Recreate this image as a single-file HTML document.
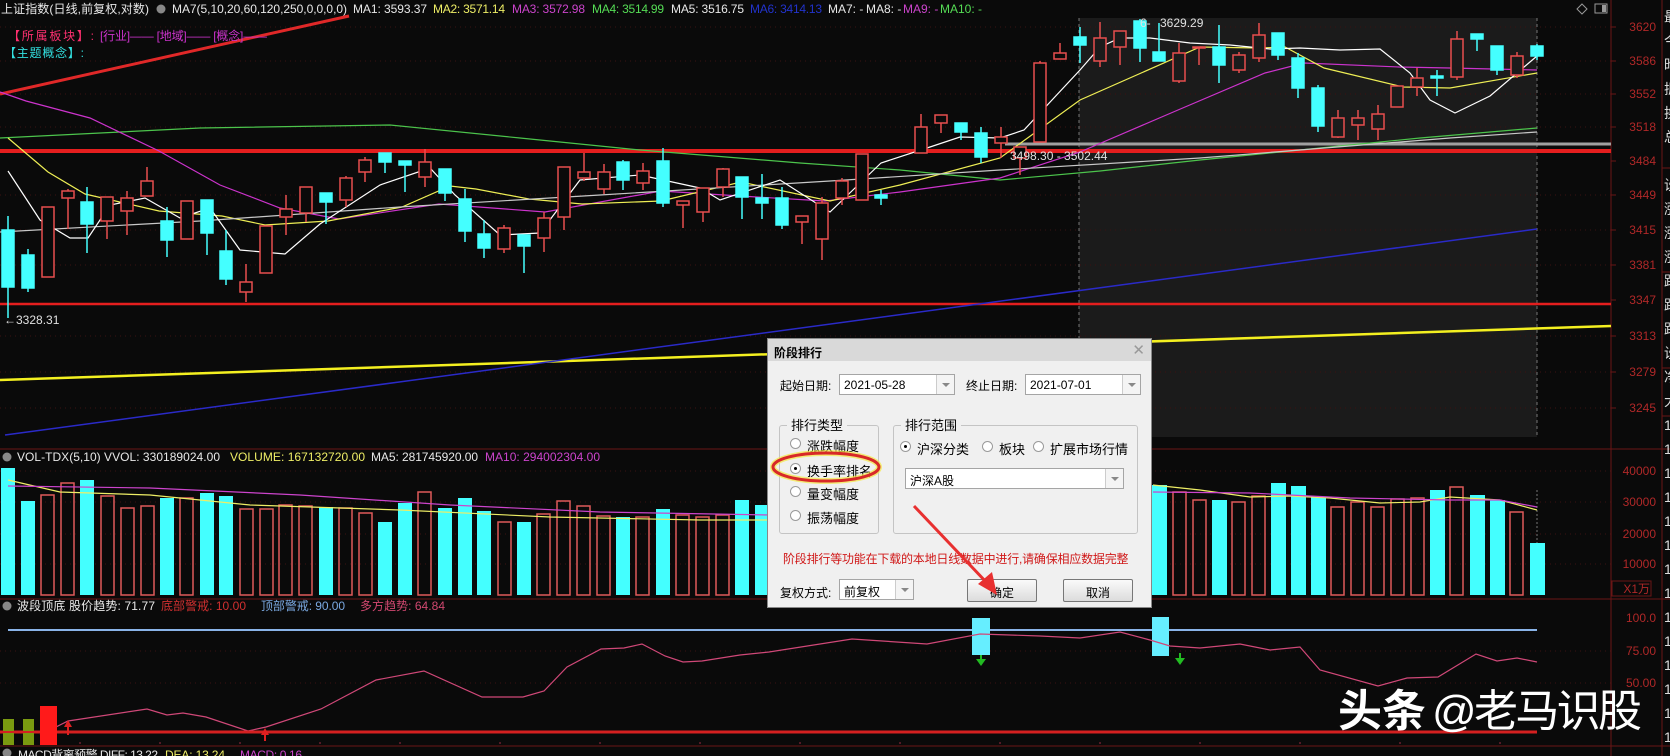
<!DOCTYPE html>
<html><head><meta charset="utf-8"><style>
*{margin:0;padding:0;box-sizing:border-box}
body{width:1670px;height:756px;background:#0a0a0a;overflow:hidden;position:relative;font-family:"Liberation Sans","Noto Sans CJK SC",sans-serif}
svg{position:absolute;left:0;top:0}
.dlg{position:absolute;left:767px;top:338px;width:385px;height:270px;background:#f0f0f0;border:1px solid #888;font-size:12px;color:#000}
.dlg .t{position:absolute;left:0;top:0;width:100%;height:22px;background:#d9d9d9;font-weight:bold;font-size:12px;padding:5px 0 0 6px}
.dlg .x{position:absolute;right:6px;top:2px;font-size:15px;color:#999;font-weight:normal}
.a{position:absolute;white-space:nowrap}
.cb{position:absolute;background:#fff;border:1px solid #a5a5a5;height:21px;font-size:12px;padding:3px 0 0 4px}
.cb i{position:absolute;right:0;top:0;width:18px;height:19px;border-left:1px solid #ccc;background:#f4f4f4}
.cb i:after{content:"";position:absolute;left:5px;top:8px;border:4px solid transparent;border-top:4px solid #888}
.gb{position:absolute;border:1px solid #c4c4c4;border-radius:3px}
.gl{position:absolute;background:#f0f0f0;padding:0 4px;font-size:13px}
.rd{position:absolute;width:11px;height:11px;border-radius:50%;border:1px solid #9a9a9a;background:#fff}
.rd.on:after{content:"";position:absolute;left:3px;top:3px;width:3px;height:3px;border-radius:50%;background:#000}
.bt{position:absolute;height:23px;border:1px solid #777;border-radius:2px;background:linear-gradient(#fafafa,#dcdcdc);text-align:center;padding-top:4px;font-size:12px}
</style></head><body>
<svg width="1670" height="756" viewBox="0 0 1670 756" font-family="Liberation Sans, Noto Sans CJK SC, sans-serif">
<rect x="1079" y="18" width="458" height="419" fill="#1b1b1b"/>
<g stroke="#3c1212" stroke-dasharray="1 4" stroke-width="1">
<line x1="0" y1="27" x2="1611" y2="27"/><line x1="0" y1="61" x2="1611" y2="61"/><line x1="0" y1="94" x2="1611" y2="94"/><line x1="0" y1="127" x2="1611" y2="127"/><line x1="0" y1="195" x2="1611" y2="195"/><line x1="0" y1="230" x2="1611" y2="230"/><line x1="0" y1="265" x2="1611" y2="265"/><line x1="0" y1="336" x2="1611" y2="336"/><line x1="0" y1="372" x2="1611" y2="372"/><line x1="0" y1="408" x2="1611" y2="408"/>
<line x1="0" y1="471" x2="1611" y2="471"/><line x1="0" y1="502" x2="1611" y2="502"/><line x1="0" y1="534" x2="1611" y2="534"/><line x1="0" y1="564" x2="1611" y2="564"/>
<line x1="0" y1="651" x2="1611" y2="651"/><line x1="0" y1="683" x2="1611" y2="683"/>
</g>
<line x1="1079" y1="18" x2="1079" y2="437" stroke="#777" stroke-dasharray="3 3"/>
<line x1="1537" y1="18" x2="1537" y2="437" stroke="#777" stroke-dasharray="3 3"/>
<line x1="1537" y1="490" x2="1537" y2="595" stroke="#777" stroke-dasharray="2 2"/>
<g stroke="#6a1515" stroke-width="1" fill="none">
<line x1="0" y1="449" x2="1670" y2="449"/><line x1="0" y1="599" x2="1670" y2="599"/><line x1="0" y1="746" x2="1670" y2="746"/>
<line x1="1611" y1="0" x2="1611" y2="756"/><line x1="1662" y1="0" x2="1662" y2="756"/>
<rect x="1612" y="581" width="39" height="15"/>
</g>
<line x1="0" y1="94" x2="349" y2="16" stroke="#e02828" stroke-width="3"/>
<line x1="0" y1="151" x2="1611" y2="151" stroke="#e41e1e" stroke-width="4"/>
<line x1="1005" y1="144" x2="1611" y2="144" stroke="#a0a0a0" stroke-width="3"/>
<line x1="0" y1="304" x2="1611" y2="304" stroke="#e41e1e" stroke-width="2.5"/>
<line x1="0" y1="380" x2="1611" y2="326" stroke="#f4f020" stroke-width="2.5"/>
<line x1="5" y1="435" x2="1537" y2="229" stroke="#2a2ac8" stroke-width="1.5"/>
<g fill="none" stroke-width="1.2">
<polyline stroke="#4cc44c" points="0,138 200,128 390,125 520,138 640,150 800,163 900,170 1000,180 1100,171 1200,160 1300,150 1420,138 1537,128"/>
<polyline stroke="#cc33cc" points="0,92 26,101 90,118 159,151 220,185 280,208 339,219 439,204 545,212 661,191 740,196 825,201 900,192 1000,178 1080,152 1178,110 1265,73 1304,63 1399,67 1450,68 1537,70"/>
<polyline stroke="#eeee55" points="8,138 48,172 85,194 159,211 222,216 265,225 328,221 402,207 450,186 476,189 529,199 582,204 661,201 741,182 830,201 900,185 1000,158 1080,100 1200,47 1259,48 1285,47 1324,68 1403,87 1450,88 1537,73"/>
<polyline stroke="#c8c8c8" points="0,232 200,221 400,207 600,195 830,181 1000,170 1200,158 1450,138 1537,132"/>
<polyline stroke="#ffffff" points="8,171 40,220 70,238 88,238 110,205 145,198 180,218 210,208 240,250 285,254 320,224 380,185 430,168 455,195 500,235 540,233 580,180 640,175 700,188 720,200 780,180 830,212 881,163 930,147 960,137 1000,138 1024,130 1080,70 1100,47 1120,38 1150,38 1190,43 1230,45 1270,49 1300,48 1340,50 1380,49 1410,73 1430,100 1455,113 1490,96 1537,56"/>
</g>
<g stroke-width="1.5">
<g stroke="#4ff" fill="#4ff">
<line x1="8" y1="216" x2="8" y2="318"/><rect x="2" y="230" width="12" height="57"/>
<line x1="28" y1="249" x2="28" y2="292"/><rect x="22" y="255" width="12" height="33"/>
<line x1="87" y1="187" x2="87" y2="253"/><rect x="81" y="202" width="12" height="22"/>
<line x1="167" y1="207" x2="167" y2="257"/><rect x="161" y="221" width="12" height="19"/>
<line x1="207" y1="200" x2="207" y2="255"/><rect x="201" y="200" width="12" height="33"/>
<line x1="226" y1="230" x2="226" y2="285"/><rect x="220" y="251" width="12" height="28"/>
<line x1="326" y1="193" x2="326" y2="224"/><rect x="320" y="193" width="12" height="9"/>
<line x1="385" y1="153" x2="385" y2="173"/><rect x="379" y="153" width="12" height="9"/>
<line x1="405" y1="161" x2="405" y2="192"/><rect x="399" y="161" width="12" height="4"/>
<line x1="445" y1="169" x2="445" y2="201"/><rect x="439" y="169" width="12" height="24"/>
<line x1="465" y1="189" x2="465" y2="242"/><rect x="459" y="199" width="12" height="32"/>
<line x1="484" y1="220" x2="484" y2="258"/><rect x="478" y="234" width="12" height="14"/>
<line x1="524" y1="235" x2="524" y2="273"/><rect x="518" y="235" width="12" height="11"/>
<line x1="623" y1="160" x2="623" y2="190"/><rect x="617" y="162" width="12" height="18"/>
<line x1="663" y1="148" x2="663" y2="207"/><rect x="657" y="161" width="12" height="42"/>
<line x1="742" y1="177" x2="742" y2="219"/><rect x="736" y="177" width="12" height="20"/>
<line x1="762" y1="174" x2="762" y2="219"/><rect x="756" y="198" width="12" height="5"/>
<line x1="782" y1="187" x2="782" y2="229"/><rect x="776" y="198" width="12" height="27"/>
<line x1="881" y1="190" x2="881" y2="205"/><rect x="875" y="195" width="12" height="3"/>
<line x1="961" y1="123" x2="961" y2="140"/><rect x="955" y="123" width="12" height="9"/>
<line x1="981" y1="127" x2="981" y2="163"/><rect x="975" y="133" width="12" height="24"/>
<line x1="1080" y1="27" x2="1080" y2="63"/><rect x="1074" y="37" width="12" height="8"/>
<line x1="1140" y1="19" x2="1140" y2="62"/><rect x="1134" y="21" width="12" height="27"/>
<line x1="1159" y1="23" x2="1159" y2="61"/><rect x="1153" y="52" width="12" height="9"/>
<line x1="1219" y1="25" x2="1219" y2="83"/><rect x="1213" y="47" width="12" height="18"/>
<line x1="1278" y1="33" x2="1278" y2="60"/><rect x="1272" y="33" width="12" height="22"/>
<line x1="1298" y1="53" x2="1298" y2="98"/><rect x="1292" y="58" width="12" height="30"/>
<line x1="1318" y1="85" x2="1318" y2="132"/><rect x="1312" y="88" width="12" height="38"/>
<line x1="1437" y1="70" x2="1437" y2="96"/><rect x="1431" y="76" width="12" height="2"/>
<line x1="1477" y1="34" x2="1477" y2="51"/><rect x="1471" y="34" width="12" height="5"/>
<line x1="1497" y1="46" x2="1497" y2="75"/><rect x="1491" y="46" width="12" height="24"/>
<line x1="1537" y1="44" x2="1537" y2="60"/><rect x="1531" y="46" width="12" height="10"/>
</g>
<g stroke="#e84e4e" fill="#0a0a0a">
<rect x="42" y="207" width="12" height="70"/>
<line x1="68" y1="189" x2="68" y2="229"/><rect x="62" y="191" width="12" height="7"/>
<line x1="107" y1="197" x2="107" y2="239"/><rect x="101" y="197" width="12" height="24"/>
<line x1="127" y1="191" x2="127" y2="235"/><rect x="121" y="198" width="12" height="13"/>
<line x1="147" y1="167" x2="147" y2="196"/><rect x="141" y="181" width="12" height="15"/>
<rect x="181" y="201" width="12" height="38"/>
<line x1="246" y1="264" x2="246" y2="302"/><rect x="240" y="282" width="12" height="10"/>
<rect x="260" y="226" width="12" height="47"/>
<line x1="286" y1="195" x2="286" y2="235"/><rect x="280" y="209" width="12" height="8"/>
<line x1="306" y1="187" x2="306" y2="222"/><rect x="300" y="187" width="12" height="26"/>
<line x1="346" y1="176" x2="346" y2="207"/><rect x="340" y="178" width="12" height="22"/>
<line x1="365" y1="157" x2="365" y2="182"/><rect x="359" y="160" width="12" height="12"/>
<line x1="425" y1="149" x2="425" y2="187"/><rect x="419" y="162" width="12" height="15"/>
<line x1="504" y1="225" x2="504" y2="253"/><rect x="498" y="228" width="12" height="21"/>
<line x1="544" y1="212" x2="544" y2="252"/><rect x="538" y="218" width="12" height="20"/>
<line x1="564" y1="167" x2="564" y2="230"/><rect x="558" y="167" width="12" height="50"/>
<line x1="584" y1="153" x2="584" y2="181"/><rect x="578" y="172" width="12" height="6"/>
<line x1="604" y1="164" x2="604" y2="194"/><rect x="598" y="172" width="12" height="17"/>
<line x1="643" y1="163" x2="643" y2="190"/><rect x="637" y="171" width="12" height="12"/>
<line x1="683" y1="201" x2="683" y2="228"/><rect x="677" y="201" width="12" height="4"/>
<line x1="703" y1="188" x2="703" y2="222"/><rect x="697" y="188" width="12" height="24"/>
<line x1="723" y1="168" x2="723" y2="197"/><rect x="717" y="169" width="12" height="18"/>
<line x1="802" y1="216" x2="802" y2="244"/><rect x="796" y="216" width="12" height="6"/>
<line x1="822" y1="197" x2="822" y2="260"/><rect x="816" y="203" width="12" height="36"/>
<line x1="842" y1="178" x2="842" y2="205"/><rect x="836" y="181" width="12" height="17"/>
<rect x="856" y="154" width="12" height="46"/>
<line x1="921" y1="114" x2="921" y2="153"/><rect x="915" y="127" width="12" height="26"/>
<line x1="941" y1="115" x2="941" y2="133"/><rect x="935" y="115" width="12" height="8"/>
<line x1="1001" y1="127" x2="1001" y2="158"/><rect x="995" y="137" width="12" height="6"/>
<line x1="1020" y1="147" x2="1020" y2="175"/><rect x="1014" y="147" width="12" height="11"/>
<line x1="1040" y1="61" x2="1040" y2="142"/><rect x="1034" y="63" width="12" height="79"/>
<line x1="1060" y1="43" x2="1060" y2="59"/><rect x="1054" y="53" width="12" height="6"/>
</g>
<g stroke="#e84e4e" fill="#1b1b1b">
<line x1="1100" y1="22" x2="1100" y2="67"/><rect x="1094" y="38" width="12" height="23"/>
<line x1="1120" y1="31" x2="1120" y2="65"/><rect x="1114" y="31" width="12" height="16"/>
<line x1="1179" y1="43" x2="1179" y2="83"/><rect x="1173" y="53" width="12" height="28"/>
<line x1="1199" y1="47" x2="1199" y2="65"/><rect x="1193" y="47" width="12" height="1"/>
<line x1="1239" y1="52" x2="1239" y2="73"/><rect x="1233" y="55" width="12" height="15"/>
<line x1="1259" y1="23" x2="1259" y2="62"/><rect x="1253" y="35" width="12" height="23"/>
<line x1="1338" y1="110" x2="1338" y2="138"/><rect x="1332" y="118" width="12" height="19"/>
<line x1="1358" y1="110" x2="1358" y2="140"/><rect x="1352" y="118" width="12" height="7"/>
<line x1="1378" y1="105" x2="1378" y2="140"/><rect x="1372" y="114" width="12" height="15"/>
<rect x="1391" y="86" width="12" height="21"/>
<line x1="1417" y1="68" x2="1417" y2="96"/><rect x="1411" y="78" width="12" height="9"/>
<line x1="1457" y1="31" x2="1457" y2="80"/><rect x="1451" y="39" width="12" height="38"/>
<line x1="1517" y1="52" x2="1517" y2="78"/><rect x="1511" y="56" width="12" height="19"/>
</g>
</g>
<g fill="#e0e0e0" font-size="12">
<text x="4" y="324">←3328.31</text>
<text x="1010" y="160">3498.30 - 3502.44</text>
<text x="1140" y="27">6-</text><text x="1160" y="27">3629.29</text>
</g>
<g fill="#4ff">
<rect x="1" y="468" width="14" height="127"/><rect x="21" y="501" width="14" height="94"/><rect x="80" y="480" width="14" height="115"/><rect x="160" y="498" width="14" height="97"/><rect x="200" y="493" width="14" height="102"/><rect x="219" y="496" width="14" height="99"/><rect x="319" y="507" width="14" height="88"/><rect x="378" y="522" width="14" height="73"/><rect x="398" y="503" width="14" height="92"/><rect x="438" y="508" width="14" height="87"/><rect x="458" y="498" width="14" height="97"/><rect x="477" y="511" width="14" height="84"/><rect x="517" y="522" width="14" height="73"/><rect x="616" y="517" width="14" height="78"/><rect x="656" y="509" width="14" height="86"/><rect x="735" y="500" width="14" height="95"/><rect x="755" y="505" width="14" height="90"/>
<rect x="1152" y="485" width="15" height="110"/><rect x="1212" y="500" width="15" height="95"/><rect x="1271" y="483" width="15" height="112"/><rect x="1291" y="486" width="15" height="109"/><rect x="1311" y="497" width="15" height="98"/><rect x="1430" y="490" width="15" height="105"/><rect x="1470" y="495" width="15" height="100"/><rect x="1490" y="500" width="15" height="95"/><rect x="1530" y="543" width="15" height="52"/>
</g>
<g fill="none" stroke="#e05a5a" stroke-width="1.5">
<rect x="41" y="495" width="13" height="100"/><rect x="61" y="483" width="13" height="112"/><rect x="101" y="496" width="13" height="99"/><rect x="121" y="508" width="13" height="87"/><rect x="141" y="506" width="13" height="89"/><rect x="180" y="498" width="13" height="97"/><rect x="240" y="509" width="13" height="86"/><rect x="260" y="509" width="13" height="86"/><rect x="279" y="505" width="13" height="90"/><rect x="299" y="506" width="13" height="89"/><rect x="339" y="508" width="13" height="87"/><rect x="359" y="513" width="13" height="82"/><rect x="418" y="492" width="13" height="103"/><rect x="498" y="522" width="13" height="73"/><rect x="537" y="514" width="13" height="81"/><rect x="557" y="501" width="13" height="94"/><rect x="577" y="506" width="13" height="89"/><rect x="597" y="516" width="13" height="79"/><rect x="636" y="517" width="13" height="78"/><rect x="676" y="515" width="13" height="80"/><rect x="696" y="517" width="13" height="78"/><rect x="716" y="515" width="13" height="80"/>
<rect x="1173" y="492" width="13" height="103"/><rect x="1193" y="500" width="13" height="95"/><rect x="1232" y="502" width="13" height="93"/><rect x="1252" y="496" width="13" height="99"/><rect x="1331" y="507" width="13" height="88"/><rect x="1351" y="502" width="13" height="93"/><rect x="1371" y="507" width="13" height="88"/><rect x="1391" y="499" width="13" height="96"/><rect x="1411" y="498" width="13" height="97"/><rect x="1450" y="487" width="13" height="108"/><rect x="1510" y="512" width="13" height="83"/>
</g>
<g fill="none" stroke-width="1.2">
<polyline stroke="#eeee66" points="8,480 60,492 150,495 250,505 400,510 550,517 700,520 770,520"/>
<polyline stroke="#cc44cc" points="8,486 150,488 300,495 450,505 600,512 770,515"/>
<polyline stroke="#eeee66" points="1153,485 1200,490 1250,497 1290,496 1330,498 1380,503 1420,502 1450,497 1500,500 1537,510"/>
<polyline stroke="#cc44cc" points="1153,492 1250,493 1350,498 1400,499 1450,500 1500,500 1537,507"/>
</g>
<line x1="8" y1="630" x2="1537" y2="630" stroke="#8ab4e8" stroke-width="2"/>
<rect x="972" y="618" width="18" height="37" fill="#66eeff"/>
<rect x="1152" y="617" width="17" height="39" fill="#66eeff"/>
<polyline fill="none" stroke="#d04878" stroke-width="1.2" points="40,735 68,721 147,709 167,715 183,713 206,717 248,731 266,727 321,709 376,680 424,671 482,697 523,697 544,691 567,667 601,649 624,648 642,644 665,656 683,662 702,661 740,655 769,652 852,639 927,644 980,634 1040,636 1080,638 1120,632 1150,640 1170,646 1200,648 1240,644 1270,650 1300,647 1320,670 1378,686 1407,678 1438,677 1476,654 1497,661 1517,658 1537,662"/>
<g fill="#22bb22"><rect x="980" y="655" width="2" height="6"/><polygon points="976,659 986,659 981,666"/><rect x="1179" y="653" width="2" height="7"/><polygon points="1175,658 1185,658 1180,665"/></g>
<line x1="0" y1="732" x2="1537" y2="732" stroke="#d42020" stroke-width="3"/>
<rect x="3" y="719" width="11" height="26" fill="#7a9a10"/><rect x="23" y="719" width="11" height="26" fill="#7a9a10"/>
<line x1="3" y1="732" x2="34" y2="732" stroke="#d42020" stroke-width="2"/>
<rect x="40" y="706" width="17" height="39" fill="#ff1a1a"/>
<g fill="#e02020"><polygon points="64,727 68,720 72,727"/><rect x="67" y="724" width="2" height="11"/><polygon points="261,735 265,728 269,735"/><rect x="264" y="731" width="2" height="10"/></g>
<g fill="#6a2030"><circle cx="80" cy="743" r="1"/><circle cx="160" cy="743" r="1"/><circle cx="240" cy="743" r="1"/><circle cx="320" cy="743" r="1"/><circle cx="400" cy="743" r="1"/><circle cx="500" cy="743" r="1"/><circle cx="600" cy="743" r="1"/><circle cx="700" cy="743" r="1"/><circle cx="800" cy="743" r="1"/><circle cx="900" cy="743" r="1"/><circle cx="1000" cy="743" r="1"/><circle cx="1100" cy="743" r="1"/><circle cx="1200" cy="743" r="1"/><circle cx="1300" cy="743" r="1"/><circle cx="1400" cy="743" r="1"/><circle cx="1500" cy="743" r="1"/></g>
<g font-size="12">
<text x="1" y="13" fill="#e8e8e8" textLength="148">上证指数(日线,前复权,对数)</text>
<circle cx="161" cy="9" r="4.5" fill="#888"/>
<text x="172" y="13" fill="#e8e8e8" textLength="175">MA7(5,10,20,60,120,250,0,0,0,0)</text>
<text x="353" y="13" fill="#e8e8e8" textLength="74">MA1: 3593.37</text>
<text x="433" y="13" fill="#eeee66" textLength="72">MA2: 3571.14</text>
<text x="512" y="13" fill="#cc44cc" textLength="73">MA3: 3572.98</text>
<text x="592" y="13" fill="#55dd55" textLength="72">MA4: 3514.99</text>
<text x="671" y="13" fill="#e8e8e8" textLength="73">MA5: 3516.75</text>
<text x="750" y="13" fill="#2233cc" textLength="72">MA6: 3414.13</text>
<text x="828" y="13" fill="#e8e8e8">MA7: -</text><text x="866" y="13" fill="#e8e8e8">MA8: -</text><text x="903" y="13" fill="#cc44cc">MA9: -</text><text x="940" y="13" fill="#55dd55">MA10: -</text>
<text x="8" y="40" fill="#ff3070" textLength="86">【所属板块】:</text>
<text x="100" y="40" fill="#cc33cc" textLength="167">[行业]—— [地域]—— [概念]——</text>
<text x="4" y="57" fill="#33e0e0" textLength="80">【主题概念】:</text>
<circle cx="7" cy="457" r="4.5" fill="#888"/>
<text x="17" y="461" fill="#e8e8e8" textLength="203">VOL-TDX(5,10) VVOL: 330189024.00</text>
<text x="230" y="461" fill="#eeee66" textLength="135">VOLUME: 167132720.00</text>
<text x="371" y="461" fill="#e8e8e8" textLength="107">MA5: 281745920.00</text>
<text x="485" y="461" fill="#cc44cc" textLength="115">MA10: 294002304.00</text>
<circle cx="7" cy="606" r="4.5" fill="#888"/>
<text x="17" y="610" fill="#e8e8e8" textLength="138">波段顶底 股价趋势: 71.77</text>
<text x="161" y="610" fill="#d03030" textLength="85">底部警戒: 10.00</text>
<text x="261" y="610" fill="#7aa8e0" textLength="84">顶部警戒: 90.00</text>
<text x="360" y="610" fill="#d04870" textLength="85">多方趋势: 64.84</text>
<circle cx="7" cy="753" r="4.5" fill="#888"/>
<text x="18" y="759" fill="#e8e8e8" textLength="140">MACD背离预警 DIFF: 13.22</text>
<text x="165" y="759" fill="#eeee66" textLength="60">DEA: 13.24</text>
<text x="240" y="759" fill="#cc44cc" textLength="62">MACD: 0.16</text>
</g>
<g font-size="12" fill="#b02828" text-anchor="end">
<text x="1656" y="31">3620</text><text x="1656" y="65">3586</text><text x="1656" y="98">3552</text><text x="1656" y="131">3518</text><text x="1656" y="165">3484</text><text x="1656" y="199">3449</text><text x="1656" y="234">3415</text><text x="1656" y="269">3381</text><text x="1656" y="304">3347</text><text x="1656" y="340">3313</text><text x="1656" y="376">3279</text><text x="1656" y="412">3245</text>
<text x="1656" y="475">40000</text><text x="1656" y="506">30000</text><text x="1656" y="538">20000</text><text x="1656" y="568">10000</text><text x="1650" y="593">X1万</text>
<text x="1656" y="622">100.0</text><text x="1656" y="655">75.00</text><text x="1656" y="687">50.00</text>
</g>
<g stroke="#6a1515"><line x1="1611" y1="27" x2="1616" y2="27"/><line x1="1611" y1="61" x2="1616" y2="61"/><line x1="1611" y1="94" x2="1616" y2="94"/><line x1="1611" y1="127" x2="1616" y2="127"/><line x1="1611" y1="161" x2="1616" y2="161"/><line x1="1611" y1="195" x2="1616" y2="195"/><line x1="1611" y1="230" x2="1616" y2="230"/><line x1="1611" y1="265" x2="1616" y2="265"/><line x1="1611" y1="300" x2="1616" y2="300"/><line x1="1611" y1="336" x2="1616" y2="336"/><line x1="1611" y1="372" x2="1616" y2="372"/><line x1="1611" y1="408" x2="1616" y2="408"/></g>
<g fill="none" stroke="#999"><polygon points="1582,4 1587,9 1582,14 1577,9"/><rect x="1595" y="4" width="12" height="9"/></g>
<rect x="1602" y="5" width="4" height="7" fill="#999"/>
<g font-size="14" fill="#ddd"><text x="1664" y="22">最</text><text x="1664" y="46">今</text><text x="1664" y="70">昨</text><text x="1664" y="94">振</text><text x="1664" y="118">换</text><text x="1664" y="142">总</text><text x="1664" y="190">设</text><text x="1664" y="214">涨</text><text x="1664" y="238">涨</text><text x="1664" y="262">涨</text><text x="1664" y="286">距</text><text x="1664" y="310">距</text><text x="1664" y="334">距</text><text x="1664" y="358">设</text><text x="1664" y="382">净</text><text x="1664" y="406">大</text>
<text x="1664" y="430">1</text><text x="1664" y="454">1</text><text x="1664" y="478">1</text><text x="1664" y="502">1</text><text x="1664" y="526">1</text><text x="1664" y="550">1</text><text x="1664" y="574">1</text><text x="1664" y="598">1</text><text x="1664" y="622">1</text><text x="1664" y="646">1</text><text x="1664" y="670">1</text><text x="1664" y="694">1</text><text x="1664" y="718">1</text><text x="1664" y="742">1</text></g>
<line x1="1662" y1="168" x2="1670" y2="168" stroke="#6a1515"/><line x1="1662" y1="272" x2="1670" y2="272" stroke="#6a1515"/><line x1="1662" y1="368" x2="1670" y2="368" stroke="#6a1515"/><line x1="1662" y1="416" x2="1670" y2="416" stroke="#6a1515"/>
<text x="1338" y="726" font-size="44" fill="#fff" font-weight="bold" font-family="Noto Sans CJK SC, sans-serif">头条</text>
<text x="1432" y="726" font-size="44" fill="#fff" font-family="Liberation Sans, Noto Sans CJK SC, sans-serif" textLength="210">@老马识股</text>
</svg>

<div class="dlg">
<div class="t">阶段排行<span class="x">✕</span></div>
<div class="a" style="left:12px;top:38px">起始日期:</div>
<div class="cb" style="left:71px;top:35px;width:116px">2021-05-28<i></i></div>
<div class="a" style="left:198px;top:38px">终止日期:</div>
<div class="cb" style="left:257px;top:35px;width:116px">2021-07-01<i></i></div>
<div class="gb" style="left:11px;top:86px;width:100px;height:109px"></div>
<div class="gl" style="left:19px;top:76px">排行类型</div>
<div class="rd" style="left:22px;top:99px"></div><div class="a" style="left:39px;top:97px;font-size:13px">涨跌幅度</div>
<div class="rd on" style="left:22px;top:124px"></div><div class="a" style="left:39px;top:122px;font-size:13px">换手率排名</div>
<div class="rd" style="left:22px;top:147px"></div><div class="a" style="left:39px;top:145px;font-size:13px">量变幅度</div>
<div class="rd" style="left:22px;top:171px"></div><div class="a" style="left:39px;top:169px;font-size:13px">振荡幅度</div>
<div class="gb" style="left:125px;top:86px;width:245px;height:109px"></div>
<div class="gl" style="left:133px;top:76px">排行范围</div>
<div class="rd on" style="left:132px;top:102px"></div><div class="a" style="left:149px;top:100px;font-size:13px">沪深分类</div>
<div class="rd" style="left:214px;top:102px"></div><div class="a" style="left:231px;top:100px;font-size:13px">板块</div>
<div class="rd" style="left:265px;top:102px"></div><div class="a" style="left:282px;top:100px;font-size:13px">扩展市场行情</div>
<div class="cb" style="left:137px;top:129px;width:219px">沪深A股<i></i></div>
<div class="a" style="left:15px;top:211px;color:#d01818;font-size:12px;letter-spacing:-0.2px">阶段排行等功能在下载的本地日线数据中进行,请确保相应数据完整</div>
<div class="a" style="left:12px;top:245px">复权方式:</div>
<div class="cb" style="left:71px;top:240px;width:75px">前复权<i></i></div>
<div class="bt" style="left:199px;top:240px;width:70px">确定</div>
<div class="bt" style="left:295px;top:240px;width:70px">取消</div>
</div>
<svg width="1670" height="756" viewBox="0 0 1670 756" style="pointer-events:none">
<ellipse cx="826" cy="467" rx="53" ry="14" fill="none" stroke="#f4e840" stroke-width="6" opacity="0.7"/>
<ellipse cx="826" cy="467" rx="53" ry="14" fill="none" stroke="#d82828" stroke-width="3"/>
<line x1="914" y1="506" x2="988" y2="584" stroke="#e83030" stroke-width="3"/>
<polygon points="997,595 978,584 992,572" fill="#e83030"/>
</svg>
</body></html>
